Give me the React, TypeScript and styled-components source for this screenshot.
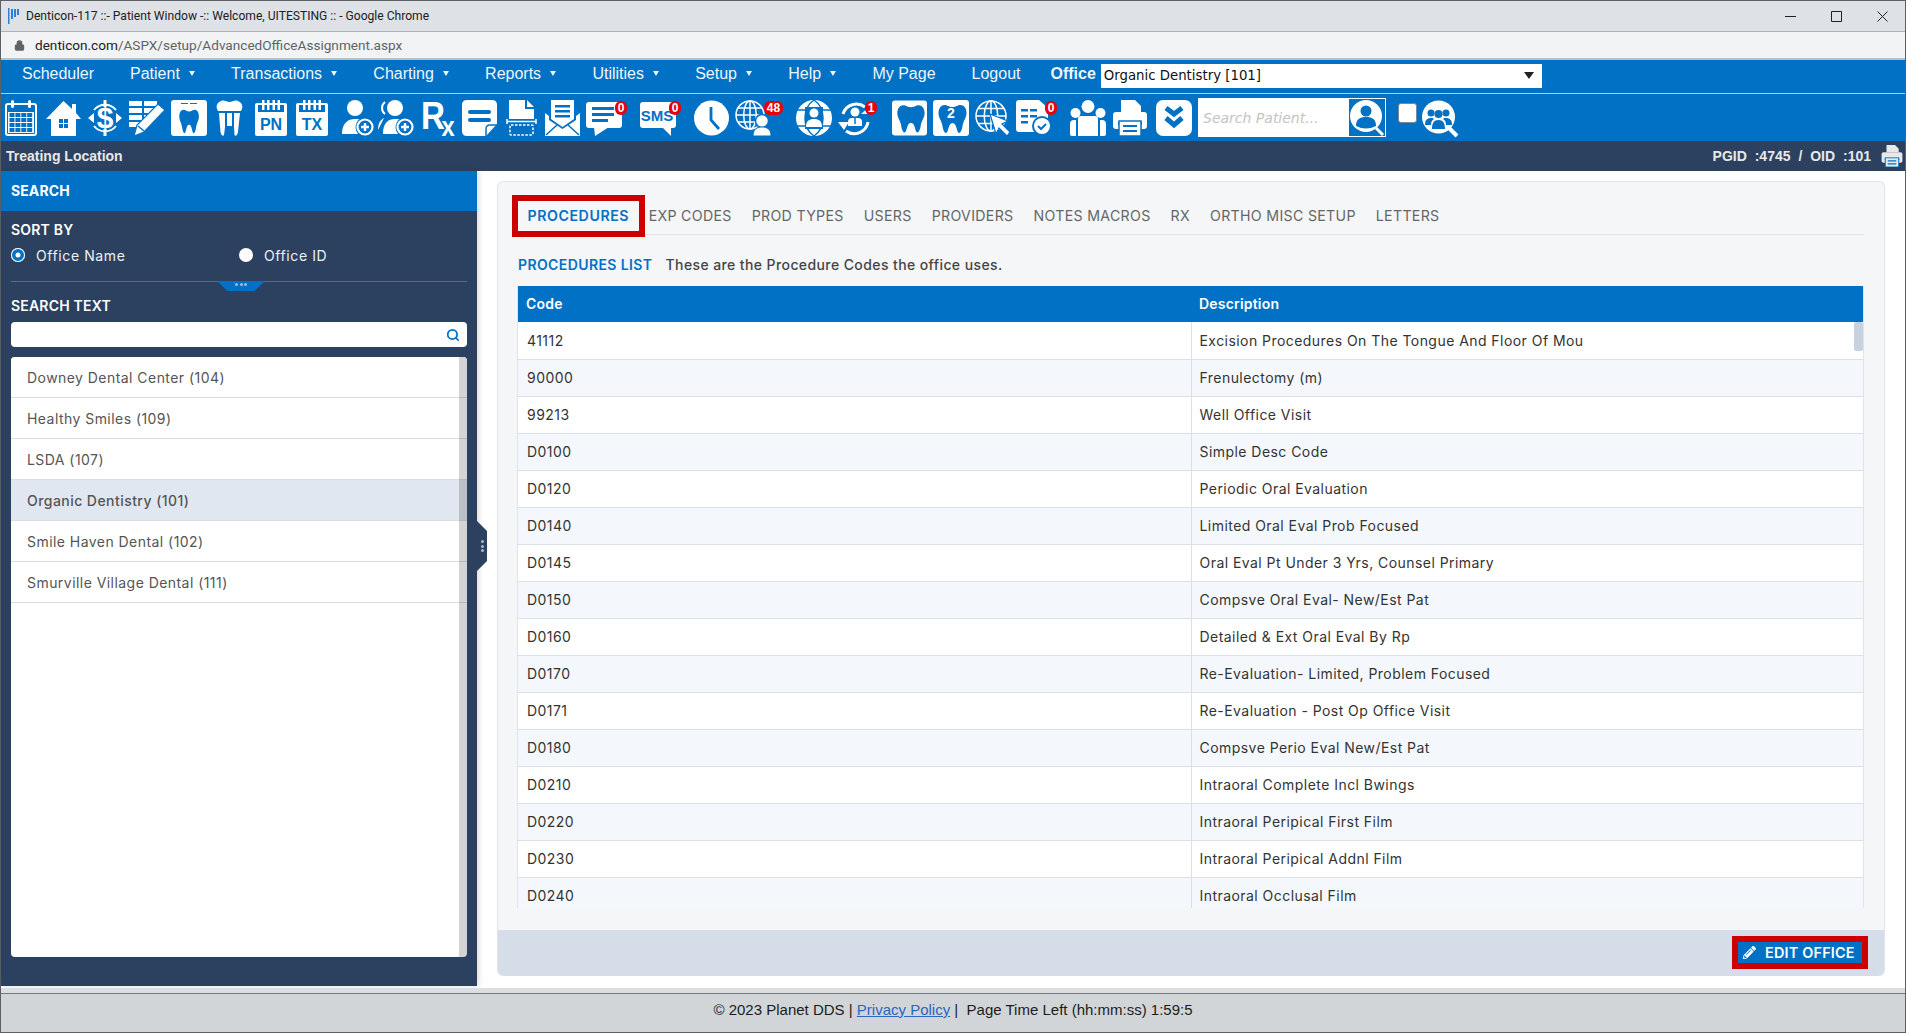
import React from 'react';
import styled, { createGlobalStyle } from 'styled-components';
import { Lock, Search } from 'lucide-react';
import { FaPencilAlt } from 'react-icons/fa';

const BLUE = '#0071c5';
const NAVY = '#2c415f';
const UI_FONT = 'Inter, "Open Sans", sans-serif';
const ARIAL = '"Liberation Sans", Arial, sans-serif';

const GlobalStyle = createGlobalStyle`
  html, body {
    margin: 0;
    height: 100%;
    overflow: hidden;
    background: #fff;
  }
`;

const Window = styled.div`
  box-sizing: border-box;
  width: 100vw;
  height: 100vh;
  display: flex;
  flex-direction: column;
  border: 1px solid #5c5f63;
  background: #fff;
  font-family: ${UI_FONT};
`;

const TitleBar = styled.div`
  box-sizing: border-box;
  height: 31px;
  flex: none;
  display: flex;
  align-items: center;
  padding-left: 7px;
  background: #dee1e6;
  border-bottom: 1px solid #aeb1b5;
`;

const TitleText = styled.span`
  flex: 1;
  margin-left: 6px;
  font: 12.1px Roboto, sans-serif;
  color: #202124;
  white-space: nowrap;
`;

const WindowButtons = styled.div`
  display: flex;
  align-items: center;
  gap: 35px;
  padding-right: 17px;
  svg {
    width: 11px;
    height: 11px;
    stroke: #202124;
    stroke-width: 1;
    fill: none;
    display: block;
  }
`;

const AddressBar = styled.div`
  box-sizing: border-box;
  height: 28px;
  flex: none;
  display: flex;
  align-items: center;
  padding-left: 13px;
  background: #f1f3f4;
  border-bottom: 2px solid #bdbfc1;
  color: #5f6368;
  svg {
    color: #5f6368;
    fill: #5f6368;
  }
`;

const Url = styled.span`
  margin-left: 10px;
  font: 13.6px Roboto, sans-serif;
  span {
    color: #202124;
  }
`;

const MenuBar = styled.div`
  box-sizing: border-box;
  height: 34px;
  flex: none;
  display: flex;
  gap: 36px;
  padding: 0 0 6px 21px;
  align-items: center;
  background: ${BLUE};
  border-bottom: 1px solid #a6cfee;
  font: 16px ${ARIAL};
  color: #eef6fc;
`;

const MenuItem = styled.span`
  display: flex;
  align-items: center;
  white-space: nowrap;
`;

const Caret = styled.i`
  width: 0;
  height: 0;
  margin-left: 9.25px;
  border: 3.5px solid transparent;
  border-top: 5px solid #eef6fc;
  border-bottom: 0;
`;

const OfficeLabel = styled.b`
  margin-left: -6px;
  margin-right: 5px;
  color: #eef6fc;
`;

const OfficeSelect = styled.div`
  box-sizing: border-box;
  width: 441px;
  height: 24px;
  margin-top: 4px;
  padding: 0 8px 0 3px;
  display: flex;
  align-items: center;
  justify-content: space-between;
  background: #fff;
  color: #111;
  font: 13.3px "DejaVu Sans", sans-serif;
  i {
    width: 0;
    height: 0;
    border: 5px solid transparent;
    border-top: 7px solid #222;
    border-bottom: 0;
  }
`;

const IconBar = styled.div`
  box-sizing: border-box;
  height: 47px;
  flex: none;
  display: flex;
  align-items: center;
  padding-left: 4px;
  background: ${BLUE};
`;

const IconSlot = styled.div<{ $w: number; $gap: number }>`
  position: relative;
  flex: none;
  width: ${p => p.$w}px;
  height: 36px;
  margin-left: ${p => p.$gap}px;
  svg {
    display: block;
    width: 100%;
    height: 100%;
    fill: #fff;
    overflow: visible;
  }
`;

const Badge = styled.span<{ $wide?: boolean }>`
  position: absolute;
  top: 1px;
  right: ${p => (p.$wide ? -12 : -5)}px;
  min-width: ${p => (p.$wide ? 19 : 12)}px;
  height: 14px;
  border-radius: 6px;
  background: #e8000b;
  color: #fff;
  font: bold 12px/14px ${ARIAL};
  text-align: center;
`;

const PatientSearch = styled.div`
  box-sizing: border-box;
  flex: none;
  width: 188px;
  height: 39px;
  margin-left: 6px;
  display: flex;
  align-items: center;
  padding-right: 1px;
  background: #fff;
`;

const PatientInput = styled.input`
  flex: 1;
  min-width: 0;
  border: 0;
  outline: 0;
  padding: 0 0 0 5px;
  background: transparent;
  font: italic 14px "DejaVu Sans", sans-serif;
  &::placeholder {
    color: #c4c4c4;
    opacity: 1;
  }
`;

const PatientButton = styled.div`
  width: 36px;
  height: 37px;
  background: ${BLUE};
  svg {
    display: block;
    width: 36px;
    height: 37px;
    fill: #fff;
  }
`;

const GroupCheck = styled.input`
  appearance: none;
  box-sizing: border-box;
  flex: none;
  width: 19px;
  height: 20px;
  margin: 0 0 9px 12px;
  border: 1.5px solid #7b8794;
  border-radius: 3px;
  background: #fff;
`;

const InfoBar = styled.div`
  box-sizing: border-box;
  height: 30px;
  flex: none;
  display: flex;
  align-items: center;
  justify-content: space-between;
  padding: 0 2px 0 5px;
  background: ${NAVY};
  color: #e8e8e8;
  font: bold 14px ${ARIAL};
`;

const InfoRight = styled.div`
  display: flex;
  align-items: center;
  gap: 10px;
  word-spacing: 4px;
  svg {
    width: 22px;
    height: 22px;
    fill: #e8e8e8;
    display: block;
  }
`;

const Body = styled.div`
  flex: 1;
  min-height: 0;
  display: flex;
  padding-bottom: 2px;
`;

const Sidebar = styled.aside`
  flex: none;
  width: 476px;
  display: flex;
  flex-direction: column;
  background: ${NAVY};
  box-shadow: 2px 0 5px rgba(0, 0, 0, 0.14);
`;

const SidebarHeader = styled.div`
  box-sizing: border-box;
  height: 40px;
  flex: none;
  display: flex;
  align-items: center;
  padding: 0 0 2px 10px;
  background: ${BLUE};
  color: #fff;
  font-size: 14px;
  font-weight: 700;
  letter-spacing: 0.1px;
`;

const SidebarBody = styled.div`
  flex: 1;
  display: flex;
  flex-direction: column;
  padding: 9px 10px 0 10px;
`;

const FieldLabel = styled.div<{ $spaced?: boolean }>`
  height: 20px;
  line-height: 20px;
  margin-top: ${p => (p.$spaced ? 14 : 0)}px;
  color: #fff;
  font-size: 14px;
  font-weight: 600;
  letter-spacing: 0.2px;
`;

const RadioRow = styled.div`
  display: flex;
  height: 20px;
  margin-top: 5px;
  padding-bottom: 16px;
  border-bottom: 1px solid #5b6b83;
  position: relative;
`;

const RadioOption = styled.label`
  flex: 1;
  display: flex;
  align-items: center;
  gap: 11px;
  color: #eef1f5;
  font-size: 14px;
  letter-spacing: 0.6px;
`;

const RadioDot = styled.input`
  appearance: none;
  box-sizing: border-box;
  width: 14px;
  height: 14px;
  margin: 0;
  border-radius: 50%;
  background: #fff;
  &:checked {
    box-shadow: inset 0 0 0 1px #fff, inset 0 0 0 4.5px ${BLUE};
  }
`;

const Grip = styled.div`
  position: absolute;
  left: 206px;
  bottom: -10px;
  width: 48px;
  height: 10px;
  display: flex;
  align-items: flex-start;
  justify-content: center;
  gap: 1.5px;
  padding-top: 2px;
  box-sizing: border-box;
  background: ${BLUE};
  clip-path: polygon(0 0, 100% 0, 78% 100%, 22% 100%);
  i {
    width: 3px;
    height: 3px;
    border-radius: 50%;
    background: #a9b6c6;
  }
`;

const SearchField = styled.div`
  box-sizing: border-box;
  height: 25px;
  margin-top: 6px;
  display: flex;
  align-items: center;
  justify-content: flex-end;
  padding-right: 7px;
  background: #fff;
  border-radius: 4px;
  color: ${BLUE};
`;

const OfficeList = styled.ul`
  position: relative;
  height: 600px;
  margin: 10px 0 0;
  padding: 0;
  list-style: none;
  background: #fff;
  border-radius: 4px;
  overflow: hidden;
`;

const OfficeRow = styled.li<{ $active?: boolean }>`
  box-sizing: border-box;
  height: 41px;
  display: flex;
  align-items: center;
  padding-left: 16px;
  border-bottom: 1px solid #dcdcdc;
  background: ${p => (p.$active ? '#e1e7f0' : '#fff')};
  color: #555;
  font-size: 14px;
  letter-spacing: 0.45px;
  font-weight: ${p => (p.$active ? 500 : 400)};
`;

const ListScroll = styled.div`
  position: absolute;
  top: 0;
  right: 0;
  bottom: 0;
  width: 8px;
  background: rgba(0, 0, 0, 0.17);
`;

const Main = styled.main`
  flex: 1;
  min-width: 0;
  position: relative;
  display: flex;
  padding: 10px 20px 10px 20px;
`;

const SplitHandle = styled.div`
  position: absolute;
  left: 0;
  top: 350px;
  width: 10px;
  height: 50px;
  display: flex;
  flex-direction: column;
  align-items: center;
  justify-content: center;
  gap: 1.5px;
  background: ${NAVY};
  clip-path: polygon(0 0, 100% 10px, 100% 40px, 0 100%);
  i {
    width: 3px;
    height: 3px;
    border-radius: 50%;
    background: #a9b6c6;
  }
`;

const Card = styled.section`
  flex: 1;
  min-width: 0;
  display: flex;
  flex-direction: column;
  box-sizing: border-box;
  background: #f5f6f8;
  border: 1px solid #dfe3ea;
  border-bottom: 0;
  border-radius: 6px;
  overflow: visible;
`;

const CardInner = styled.div`
  flex: 1;
  padding: 0 20px;
`;

const Tabs = styled.nav`
  display: flex;
  padding: 19px 0 3px;
  border-bottom: 1px solid #dfe3ea;
`;

const Tab = styled.span<{ $active?: boolean }>`
  height: 30px;
  line-height: 30px;
  padding: 0 ${p => (p.$active ? 9.5 : 10)}px;
  color: ${p => (p.$active ? BLUE : '#666')};
  font-size: 14.2px;
  font-weight: ${p => (p.$active ? 600 : 400)};
  letter-spacing: ${p => (p.$active ? 0.55 : 0.3)}px;
  white-space: nowrap;
  outline: ${p => (p.$active ? '6px solid #cc0000' : 'none')};
`;

const ListTitle = styled.div`
  display: flex;
  gap: 13px;
  height: 20px;
  line-height: 20px;
  margin: 20px 0 11px;
  font-size: 14px;
  font-weight: 500;
  letter-spacing: 0.4px;
  color: #444;
  b {
    color: ${BLUE};
    font-weight: 600;
  }
`;

const TableWrap = styled.div`
  position: relative;
  height: 622px;
  overflow: hidden;
  border-right: 1px solid #dfe3ea;
  border-left: 1px solid #dfe3ea;
  margin-left: -1px;
`;

const Table = styled.table`
  width: 100%;
  table-layout: fixed;
  border-collapse: collapse;
  font-size: 14px;
  letter-spacing: 0.45px;
  color: #333;

  th {
    height: 36px;
    padding: 0 0 2px 8px;
    box-sizing: border-box;
    background: ${BLUE};
    color: #fff;
    font-size: 14px;
    font-weight: 600;
    letter-spacing: 0.2px;
    text-align: left;
  }

  th + th {
    padding-left: 8px;
  }

  td {
    box-sizing: border-box;
    height: 37px;
    padding: 0 0 0 9px;
    border-bottom: 1px solid #dbe0e8;
    white-space: nowrap;
    overflow: hidden;
  }

  td + td {
    border-left: 1px solid #dbe0e8;
    padding-left: 8px;
  }

  tbody tr:nth-child(odd) td {
    background: #fff;
  }

  tbody tr:nth-child(even) td {
    background: #f4f8fc;
  }
`;

const TableThumb = styled.div`
  position: absolute;
  top: 36px;
  right: 0;
  width: 9px;
  height: 29px;
  border-radius: 2px;
  background: #c7d2e1;
`;

const EditBar = styled.div`
  box-sizing: border-box;
  height: 46px;
  flex: none;
  display: flex;
  align-items: center;
  justify-content: flex-end;
  padding: 0 22px 1px 0;
  background: #d5dee8;
  border-radius: 0 0 6px 6px;
`;

const EditButton = styled.button`
  box-sizing: border-box;
  width: 124px;
  height: 21px;
  display: flex;
  align-items: center;
  gap: 9px;
  padding: 0 0 0 5px;
  border: 0;
  outline: 6px solid #cc0000;
  background: ${BLUE};
  color: #fff;
  font: 600 14.4px ${UI_FONT};
  letter-spacing: 0.2px;
  white-space: nowrap;
`;

const BottomStrip = styled.div`
  flex: none;
  height: 5px;
  background: #dcdfe2;
  border-bottom: 1px solid #787b7e;
`;

const Footer = styled.footer`
  flex: none;
  height: 38px;
  display: flex;
  align-items: flex-start;
  justify-content: center;
  padding-top: 7px;
  box-sizing: border-box;
  background: #d1d5d8;
  color: #1c1c1c;
  font: 15px ${ARIAL};
  white-space: pre;
  a {
    color: #2a66c2;
  }
`;

const toothPath =
  'M10 5C6 5 4 9 4 13c0 5 3 7 4 13 .5 4 2 7 3.5 7 2.5 0 2-10 6.5-10s4 10 6.5 10c1.5 0 3-3 3.5-7 1-6 4-8 4-13 0-4-2-8-6-8-3 0-4 2-8 2s-5-2-8-2z';

const Globe = ({ cx, cy, r }: { cx: number; cy: number; r: number }) => (
  <g fill="none" stroke="#fff" strokeWidth="1.5">
    <circle cx={cx} cy={cy} r={r} />
    <ellipse cx={cx} cy={cy} rx={r * 0.45} ry={r} />
    <path d={`M${cx} ${cy - r}V${cy + r}M${cx - r} ${cy}H${cx + r}`} />
    <path d={`M${cx - r * 0.85} ${cy - r * 0.5}H${cx + r * 0.85}M${cx - r * 0.85} ${cy + r * 0.5}H${cx + r * 0.85}`} />
  </g>
);

const SvgWord = ({ x, y, size, children, fill = BLUE }: { x: number; y: number; size: number; children: string; fill?: string }) => (
  <text x={x} y={y} fontSize={size} fontWeight="700" fontFamily={ARIAL} textAnchor="middle" fill={fill}>
    {children}
  </text>
);

const PlusDisc = ({ cx, cy }: { cx: number; cy: number }) => (
  <g>
    <circle cx={cx} cy={cy} r="9.5" fill={BLUE} />
    <circle cx={cx} cy={cy} r="7.5" fill={BLUE} stroke="#fff" strokeWidth="2.2" />
    <path d={`M${cx - 4} ${cy}h8M${cx} ${cy - 4}v8`} stroke="#fff" strokeWidth="2.5" />
  </g>
);

const Printer = () => (
  <svg viewBox="0 0 34 36">
    <path d="M8 0h14l6 6v6H8z" />
    <rect y="12" width="34" height="17" rx="3" />
    <rect x="5" y="22" width="24" height="3" fill={BLUE} />
    <rect x="6" y="21" width="22" height="15" stroke={BLUE} strokeWidth="1.5" />
    <path d="M10 26h14M10 31h14" stroke={BLUE} strokeWidth="2" />
  </svg>
);

type BarIcon = { w: number; gap: number; badge?: string; wide?: boolean; art: React.ReactNode };

const barIcons: BarIcon[] = [
  {
    w: 32,
    gap: 0,
    art: (
      <svg viewBox="0 0 32 36">
        <rect x="1" y="4" width="30" height="31" rx="2" fill="none" stroke="#fff" strokeWidth="2" />
        <rect x="6" y="0" width="3" height="8" rx="1.5" />
        <rect x="23" y="0" width="3" height="8" rx="1.5" />
        <rect x="3" y="12" width="26" height="21" />
        {[0, 1, 2, 3].flatMap(r =>
          [0, 1, 2, 3].map(c => (
            <rect key={`${r}-${c}`} x={4.5 + c * 5.9} y={13 + r * 5} width="5" height="4" fill={BLUE} />
          )),
        )}
      </svg>
    ),
  },
  {
    w: 35,
    gap: 9,
    art: (
      <svg viewBox="0 0 35 36">
        <path d="M17.5 1 26 9V4h4v9l5 6h-5v17H5V19H0z" />
        <path d="M13 19h4v4h-4zM18 19h4v4h-4zM13 24h4v4h-4zM18 24h4v4h-4z" fill={BLUE} />
      </svg>
    ),
  },
  {
    w: 34,
    gap: 7,
    art: (
      <svg viewBox="0 0 34 36">
        <path d="M0 18l6-5v10zM34 18l-6-5v10z" />
        <path d="M6 10A14 14 0 0 1 28 10M6 26A14 14 0 0 0 28 26" fill="none" stroke="#fff" strokeWidth="2" />
        <path d="M15.5 0h3v7h-3zM15.5 29h3v7h-3z" />
        <SvgWord x={17} y={28} size={30} fill="#fff">$</SvgWord>
      </svg>
    ),
  },
  {
    w: 36,
    gap: 7,
    art: (
      <svg viewBox="0 0 36 36">
        <path d="M0 1h13v5H0zM15 1h13v5H15zM0 8h13v5H0zM15 8h9v5h-9zM0 15h13v5H0zM15 15h3v5h-3zM0 22h13v5H0z" />
        <path d="M29 4l7 6-21 22-10 4 3-11z" stroke={BLUE} strokeWidth="1.2" />
        <path d="M9 26l6 5" stroke={BLUE} strokeWidth="1.5" />
      </svg>
    ),
  },
  {
    w: 36,
    gap: 6,
    art: (
      <svg viewBox="0 0 36 36">
        <rect width="36" height="36" rx="3" />
        <path d="M10 3.5h7M19 3.5h7" stroke={BLUE} strokeWidth="1.2" />
        <path d={toothPath} fill={BLUE} transform="translate(5.5 5.5) scale(.7 .84)" />
      </svg>
    ),
  },
  {
    w: 27,
    gap: 9,
    art: (
      <svg viewBox="0 0 27 36">
        <path d="M5 1c3-1.5 6 1 8.5 1S19-.5 22 1c4 1.5 5 5 4 8l-1 2H2L1 9C0 6 1 2.5 5 1z" />
        <path d="M3 13h6v14l-1 8c-1 2-3 0-3.5-3zM18 13h6l-2 19c-.5 3-2.5 5-3.5 3L18 27zM11 13h5v13h-5z" />
      </svg>
    ),
  },
  {
    w: 32,
    gap: 12,
    art: (
      <svg viewBox="0 0 32 36">
        <rect y="3" width="32" height="33" rx="2" />
        <rect x="3" y="5" width="26" height="7" fill={BLUE} />
        <path d="M7 0h2.5v10H7zM12 0h2.5v10H12zM17.5 0H20v10h-2.5zM22.5 0H25v10h-2.5z" />
        <SvgWord x={16} y={30} size={16}>PN</SvgWord>
      </svg>
    ),
  },
  {
    w: 32,
    gap: 9,
    art: (
      <svg viewBox="0 0 32 36">
        <rect y="3" width="32" height="33" rx="2" />
        <rect x="3" y="5" width="26" height="7" fill={BLUE} />
        <path d="M7 0h2.5v10H7zM12 0h2.5v10H12zM17.5 0H20v10h-2.5zM22.5 0H25v10h-2.5z" />
        <SvgWord x={16} y={30} size={16}>TX</SvgWord>
      </svg>
    ),
  },
  {
    w: 31,
    gap: 14,
    art: (
      <svg viewBox="0 0 31 36">
        <circle cx="13" cy="8" r="8" />
        <path d="M0 34c0-11 6-15 13-15 6 0 10 2 12 7l-10 8z" />
        <PlusDisc cx={23} cy={27} />
      </svg>
    ),
  },
  {
    w: 36,
    gap: 5,
    art: (
      <svg viewBox="0 0 36 36">
        <circle cx="17" cy="8" r="8" />
        <path d="M7 2C3 5 3 11 7 14" fill="none" stroke="#fff" strokeWidth="2" />
        <path d="M0 30c0-6 2-10 6-12M5 34c0-11 5-15 12-15 6 0 10 2 12 7l-10 8z" />
        <PlusDisc cx={27} cy={27} />
      </svg>
    ),
  },
  {
    w: 32,
    gap: 7,
    art: (
      <svg viewBox="0 0 32 36">
        <text y="29" fontSize="39" fontWeight="700" fontFamily={ARIAL} transform="scale(.85 1)">
          R
          <tspan dx="-4" dy="7" fontSize="28">x</tspan>
        </text>
      </svg>
    ),
  },
  {
    w: 35,
    gap: 9,
    art: (
      <svg viewBox="0 0 35 36">
        <path d="M5 0h25q5 0 5 5v19L24 36H5q-5 0-5-5V5q0-5 5-5z" />
        <rect x="6" y="10" width="23" height="4" rx="2" fill={BLUE} />
        <rect x="6" y="18" width="23" height="4" rx="2" fill={BLUE} />
        <path d="M35 25h-7q-4 0-4 4v7" fill="none" stroke={BLUE} strokeWidth="1.5" />
      </svg>
    ),
  },
  {
    w: 31,
    gap: 9,
    art: (
      <svg viewBox="0 0 31 36">
        <path d="M3 0h16v9h9v10H3zM21 0l7 7h-7z" />
        <path d="M1 21.5h29M1 19v5M30 19v5" stroke="#fff" strokeWidth="1.5" fill="none" />
        <rect x="4" y="25" width="23" height="10" rx="1" fill="none" stroke="#fff" strokeWidth="1.5" strokeDasharray="2.5 1.5" />
      </svg>
    ),
  },
  {
    w: 35,
    gap: 8,
    art: (
      <svg viewBox="0 0 35 36">
        <path d="M6 0h23v19l-11.5 8L6 19z" />
        <path d="M10 5h15v2.5H10zM10 10h15v2.5H10zM10 15h15v2.5H10z" fill={BLUE} />
        <path d="M0 13l4 3v4l13.5 9L31 20v-4l4-3v23H0z" />
        <path d="M1 35l11-10M34 35L23 25" stroke={BLUE} strokeWidth="1.5" />
      </svg>
    ),
  },
  {
    w: 36,
    gap: 6,
    badge: '0',
    art: (
      <svg viewBox="0 0 36 36">
        <rect y="2" width="36" height="26" rx="3" />
        <path d="M8 27l1 9 14-9z" />
        <path d="M6 7h22v3H6zM6 13h22v3H6zM6 19h16v3H6z" fill={BLUE} />
      </svg>
    ),
  },
  {
    w: 36,
    gap: 18,
    badge: '0',
    art: (
      <svg viewBox="0 0 36 36">
        <rect y="2" width="36" height="26" rx="3" />
        <path d="M22 27l9 9v-9z" />
        <SvgWord x={17} y={21} size={15}>SMS</SvgWord>
      </svg>
    ),
  },
  {
    w: 35,
    gap: 18,
    art: (
      <svg viewBox="0 0 35 36">
        <circle cx="17.5" cy="18" r="17.5" />
        <path d="M17 7v13l8 9" fill="none" stroke={BLUE} strokeWidth="2.8" />
      </svg>
    ),
  },
  {
    w: 36,
    gap: 6,
    badge: '48',
    wide: true,
    art: (
      <svg viewBox="0 0 36 36">
        <Globe cx={15} cy={15} r={14} />
        <circle cx="27" cy="21" r="6.5" stroke={BLUE} strokeWidth="1.5" />
        <path d="M18 36c0-7 4-9 9-9s9 2 9 9z" stroke={BLUE} strokeWidth="1" />
      </svg>
    ),
  },
  {
    w: 36,
    gap: 25,
    art: (
      <svg viewBox="0 0 36 36">
        <circle cx="18" cy="18" r="18" />
        <path d="M0 10h36M0 26h36M18 0C6 8 6 28 18 36M18 0c12 8 12 28 0 36" fill="none" stroke={BLUE} strokeWidth="1.5" />
        <rect x="9" y="7" width="18" height="22" fill={BLUE} />
        <circle cx="18" cy="13" r="4.5" />
        <path d="M10 27c0-6 3-8 8-8s8 2 8 8z" />
      </svg>
    ),
  },
  {
    w: 34,
    gap: 6,
    badge: '1',
    art: (
      <svg viewBox="0 0 34 36">
        <path d="M5 14A14 14 0 0 1 27 7M30 22A14 14 0 0 1 8 31" fill="none" stroke="#fff" strokeWidth="3" />
        <path d="M0 22h11l-5 8zM33 5v9H23z" />
        <circle cx="17" cy="12" r="4.5" />
        <path d="M10 26v-4q0-4 4-4h6q4 0 4 4v4z" />
        <path d="M17 18v6" stroke={BLUE} strokeWidth="1.5" />
      </svg>
    ),
  },
  {
    w: 35,
    gap: 20,
    art: (
      <svg viewBox="0 0 36 36">
        <rect width="36" height="36" rx="3" />
        <path d={toothPath} fill={BLUE} transform="translate(1.5 0)" />
      </svg>
    ),
  },
  {
    w: 36,
    gap: 6,
    art: (
      <svg viewBox="0 0 36 36">
        <rect width="36" height="36" rx="3" />
        <path d={toothPath} fill={BLUE} transform="translate(1.5 0)" />
        <SvgWord x={18} y={18} size={14} fill="#fff">2</SvgWord>
      </svg>
    ),
  },
  {
    w: 35,
    gap: 6,
    art: (
      <svg viewBox="0 0 35 36">
        <Globe cx={16} cy={16} r={15} />
        <path d="M15 14l18 7-6 3 8 8-3 4-8-8-3 6z" stroke={BLUE} strokeWidth="1.2" />
      </svg>
    ),
  },
  {
    w: 36,
    gap: 6,
    badge: '0',
    art: (
      <svg viewBox="0 0 36 36">
        <path d="M3 0h20l9 8v24H3q-3 0-3-3V3q0-3 3-3z" />
        <path d="M5 9h7v2.5H5zM14 9h7v2.5h-7zM5 15h7v2.5H5zM14 15h7v2.5h-7zM5 21h7v2.5H5z" fill={BLUE} />
        <circle cx="26" cy="26" r="10" fill={BLUE} />
        <circle cx="26" cy="26" r="8" />
        <path d="M22 26l3 3 5-5" fill="none" stroke={BLUE} strokeWidth="2" />
      </svg>
    ),
  },
  {
    w: 36,
    gap: 18,
    art: (
      <svg viewBox="0 0 36 36">
        <circle cx="18" cy="6.5" r="6.5" />
        <circle cx="5.5" cy="13" r="5" />
        <circle cx="30.5" cy="13" r="5" />
        <path d="M11 16h14q3 0 3 3v17H8V19q0-3 3-3zM6 20v16H2q-2 0-2-2V24q0-4 4-4zM30 20v16h4q2 0 2-2V24q0-4-4-4z" />
      </svg>
    ),
  },
  { w: 34, gap: 7, art: <Printer /> },
  {
    w: 36,
    gap: 9,
    art: (
      <svg viewBox="0 0 36 36">
        <rect width="36" height="36" rx="7" />
        <path d="M10 8l8 6 8-6M10 18l8 7 8-7" fill="none" stroke={BLUE} strokeWidth="5" />
      </svg>
    ),
  },
];

const menu: { label: string; caret?: boolean }[] = [
  { label: 'Scheduler' },
  { label: 'Patient', caret: true },
  { label: 'Transactions', caret: true },
  { label: 'Charting', caret: true },
  { label: 'Reports', caret: true },
  { label: 'Utilities', caret: true },
  { label: 'Setup', caret: true },
  { label: 'Help', caret: true },
  { label: 'My Page' },
  { label: 'Logout' },
];

const offices = [
  'Downey Dental Center (104)',
  'Healthy Smiles (109)',
  'LSDA (107)',
  'Organic Dentistry (101)',
  'Smile Haven Dental (102)',
  'Smurville Village Dental (111)',
];

const tabs = ['PROCEDURES', 'EXP CODES', 'PROD TYPES', 'USERS', 'PROVIDERS', 'NOTES MACROS', 'RX', 'ORTHO MISC SETUP', 'LETTERS'];

const procedures: [string, string][] = [
  ['41112', 'Excision Procedures On The Tongue And Floor Of Mou'],
  ['90000', 'Frenulectomy (m)'],
  ['99213', 'Well Office Visit'],
  ['D0100', 'Simple Desc Code'],
  ['D0120', 'Periodic Oral Evaluation'],
  ['D0140', 'Limited Oral Eval Prob Focused'],
  ['D0145', 'Oral Eval Pt Under 3 Yrs, Counsel Primary'],
  ['D0150', 'Compsve Oral Eval- New/Est Pat'],
  ['D0160', 'Detailed & Ext Oral Eval By Rp'],
  ['D0170', 'Re-Evaluation- Limited, Problem Focused'],
  ['D0171', 'Re-Evaluation - Post Op Office Visit'],
  ['D0180', 'Compsve Perio Eval New/Est Pat'],
  ['D0210', 'Intraoral Complete Incl Bwings'],
  ['D0220', 'Intraoral Peripical First Film'],
  ['D0230', 'Intraoral Peripical Addnl Film'],
  ['D0240', 'Intraoral Occlusal Film'],
];

export default function App() {
  return (
    <Window>
      <GlobalStyle />
      <TitleBar>
        <svg width="12" height="16" viewBox="0 0 12 16">
          <path d="M0 0h1.5v16H0zM3 1h2v10H3zM6 1h2v8H6zM9 1h2v6H9z" fill="#2f7fd6" />
        </svg>
        <TitleText>Denticon-117 ::- Patient Window -:: Welcome, UITESTING :: - Google Chrome</TitleText>
        <WindowButtons>
          <svg viewBox="0 0 11 11"><path d="M0 5.5h11" /></svg>
          <svg viewBox="0 0 11 11"><path d="M.5.5h10v10H.5z" /></svg>
          <svg viewBox="0 0 11 11"><path d="M.5.5l10 10M10.5.5l-10 10" /></svg>
        </WindowButtons>
      </TitleBar>
      <AddressBar>
        <Lock size={11} strokeWidth={2.5} />
        <Url><span>denticon.com</span>/ASPX/setup/AdvancedOfficeAssignment.aspx</Url>
      </AddressBar>
      <MenuBar>
        {menu.map(item => (
          <MenuItem key={item.label}>
            {item.label}
            {item.caret && <Caret />}
          </MenuItem>
        ))}
        <MenuItem>
          <OfficeLabel>Office</OfficeLabel>
          <OfficeSelect>Organic Dentistry [101]<i /></OfficeSelect>
        </MenuItem>
      </MenuBar>
      <IconBar>
        {barIcons.map((icon, i) => (
          <IconSlot key={i} $w={icon.w} $gap={icon.gap}>
            {icon.art}
            {icon.badge && <Badge $wide={icon.wide}>{icon.badge}</Badge>}
          </IconSlot>
        ))}
        <PatientSearch>
          <PatientInput placeholder="Search Patient..." />
          <PatientButton>
            <svg viewBox="0 0 36 37">
              <circle cx="17" cy="17" r="16" />
              <circle cx="17" cy="12" r="5.5" fill={BLUE} />
              <path d="M7 27c0-7 4-9 10-9s10 2 10 9q-10 5-20 0z" fill={BLUE} />
              <path d="M27 29l7 7" stroke="#fff" strokeWidth="3" />
            </svg>
          </PatientButton>
        </PatientSearch>
        <GroupCheck type="checkbox" />
        <IconSlot $w={36} $gap={5}>
          <svg viewBox="0 0 36 36">
            <circle cx="16.5" cy="17" r="16.5" />
            <path d="M27 28l8 8" stroke="#fff" strokeWidth="4" />
            <g fill={BLUE}>
              <circle cx="9" cy="13" r="3.5" />
              <circle cx="24" cy="13" r="3.5" />
              <circle cx="16.5" cy="14" r="4" />
              <path d="M3 25c0-5 2-7 6-7 2 0 3 .5 3 1-2 1-3 3-3 6zM30 25c0-5-2-7-6-7-2 0-3 .5-3 1 2 1 3 3 3 6zM10 29c0-6 2-9 6.5-9s6.5 3 6.5 9z" />
            </g>
          </svg>
        </IconSlot>
      </IconBar>
      <InfoBar>
        <span>Treating Location</span>
        <InfoRight>
          <span>PGID :4745 / OID :101</span>
          <Printer />
        </InfoRight>
      </InfoBar>
      <Body>
        <Sidebar>
          <SidebarHeader>SEARCH</SidebarHeader>
          <SidebarBody>
            <FieldLabel>SORT BY</FieldLabel>
            <RadioRow>
              <RadioOption>
                <RadioDot type="radio" name="sort" defaultChecked />
                Office Name
              </RadioOption>
              <RadioOption>
                <RadioDot type="radio" name="sort" />
                Office ID
              </RadioOption>
              <Grip><i /><i /><i /></Grip>
            </RadioRow>
            <FieldLabel $spaced>SEARCH TEXT</FieldLabel>
            <SearchField>
              <Search size={14} strokeWidth={3} />
            </SearchField>
            <OfficeList>
              {offices.map(name => (
                <OfficeRow key={name} $active={name.startsWith('Organic')}>{name}</OfficeRow>
              ))}
              <ListScroll />
            </OfficeList>
          </SidebarBody>
        </Sidebar>
        <Main>
          <SplitHandle><i /><i /><i /></SplitHandle>
          <Card>
            <CardInner>
              <Tabs>
                {tabs.map(tab => (
                  <Tab key={tab} $active={tab === 'PROCEDURES'}>{tab}</Tab>
                ))}
              </Tabs>
              <ListTitle>
                <b>PROCEDURES LIST</b>
                <span>These are the Procedure Codes the office uses.</span>
              </ListTitle>
              <TableWrap>
                <Table>
                  <colgroup>
                    <col style={{ width: 673 }} />
                    <col />
                  </colgroup>
                  <thead>
                    <tr>
                      <th>Code</th>
                      <th>Description</th>
                    </tr>
                  </thead>
                  <tbody>
                    {procedures.map(([code, desc]) => (
                      <tr key={code}>
                        <td>{code}</td>
                        <td>{desc}</td>
                      </tr>
                    ))}
                  </tbody>
                </Table>
                <TableThumb />
              </TableWrap>
            </CardInner>
            <EditBar>
              <EditButton>
                <FaPencilAlt size={13} />
                EDIT OFFICE
              </EditButton>
            </EditBar>
          </Card>
        </Main>
      </Body>
      <BottomStrip />
      <Footer>
        © 2023 Planet DDS | <a href="#privacy">Privacy Policy</a> |  Page Time Left (hh:mm:ss) 1:59:5
      </Footer>
    </Window>
  );
}
